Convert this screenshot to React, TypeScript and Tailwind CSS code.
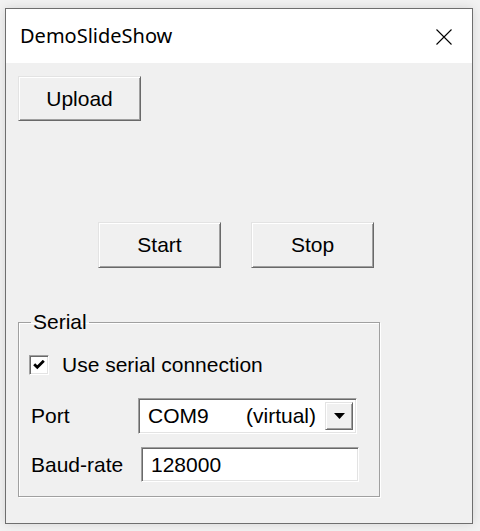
import React from 'react'

const ui = { fontFamily: '"Liberation Sans", Arial, sans-serif' }

function WinButton({ label, className }: { label: string; className?: string }) {
    return (
        <button
            type="button"
            className={`flex items-center justify-center bg-[#f0f0f0] border border-t-[#e3e3e3] border-l-[#e3e3e3] border-r-[#696969] border-b-[#696969] shadow-[inset_1px_1px_0_#ffffff,inset_-1px_-1px_0_#a0a0a0] text-[21px] text-black ${className ?? ''}`}
        >
            {label}
        </button>
    )
}

export default function App() {
    return (
        <div className="w-[480px] h-[531px] bg-[#f2f2f2] pl-[5px] pt-[8px]" style={ui}>
            {/* Dialog window */}
            <div className="w-[468px] h-[516px] border border-[#6e6e6e] bg-[#f0f0f0] shadow-[0_0_10px_rgba(0,0,0,0.12)] flex flex-col">
                {/* Title bar */}
                <div className="h-[54px] bg-white flex items-center justify-between pl-[14px] pr-[20px]">
                    <span className="text-[20px] text-black" style={{ fontFamily: '"Noto Sans", "Open Sans", sans-serif' }}>
                        DemoSlideShow
                    </span>
                    <svg width="16" height="16" viewBox="0 0 16 16" className="mt-[1px]">
                        <path d="M0.5 0.5 L15.5 15.5 M15.5 0.5 L0.5 15.5" stroke="#000" strokeWidth="1.1" />
                    </svg>
                </div>

                {/* Client area */}
                <div className="flex flex-col pl-[12px]">
                    <WinButton label="Upload" className="mt-[13px] w-[123px] h-[45px]" />

                    <div className="flex gap-[30px] mt-[101px] ml-[80px]">
                        <WinButton label="Start" className="w-[123px] h-[46px]" />
                        <WinButton label="Stop" className="w-[123px] h-[46px]" />
                    </div>

                    {/* Serial group box */}
                    <fieldset className="mt-[42px] w-[362px] border border-[#a0a0a0] shadow-[inset_1px_1px_0_#ffffff,1px_1px_0_#ffffff] pl-[12px] pb-[14px]">
                        <legend className="px-[2px] text-[21px] leading-[24px] text-black">Serial</legend>

                        <div className="flex items-center gap-[13px] mt-[19px] h-[24px] -ml-[2px]">
                            <div className="w-[20px] h-[20px] bg-white border border-t-[#a0a0a0] border-l-[#a0a0a0] border-r-white border-b-white shadow-[inset_1px_1px_0_#696969,inset_-1px_-1px_0_#e3e3e3] flex items-center justify-center">
                                <svg width="12" height="10" viewBox="0 0 12 10">
                                    <path d="M1.2 4.2 L4.3 7.3 L10.8 0.8" fill="none" stroke="#000" strokeWidth="2.8" />
                                </svg>
                            </div>
                            <span className="text-[21px] text-black">Use serial connection</span>
                        </div>

                        <div className="flex items-center mt-[21px]">
                            <span className="w-[107px] text-[21px] text-black">Port</span>
                            <div className="w-[219px] h-[36px] bg-white border border-t-[#a0a0a0] border-l-[#a0a0a0] border-r-white border-b-white shadow-[inset_1px_1px_0_#696969,inset_-1px_-1px_0_#e3e3e3] flex items-center pl-[9px] pr-[3px]">
                                <span className="text-[21px] text-black w-[98px]">COM9</span>
                                <span className="text-[21px] text-black flex-1">(virtual)</span>
                                <div className="w-[28px] h-[28px] bg-[#f0f0f0] border border-t-[#e3e3e3] border-l-[#e3e3e3] border-r-[#696969] border-b-[#696969] shadow-[inset_1px_1px_0_#ffffff,inset_-1px_-1px_0_#a0a0a0] flex items-center justify-center">
                                    <svg width="11" height="6" viewBox="0 0 11 6">
                                        <path d="M0 0 H11 L5.5 6 Z" fill="#000" />
                                    </svg>
                                </div>
                            </div>
                        </div>

                        <div className="flex items-center mt-[13px]">
                            <span className="w-[110px] text-[21px] text-black">Baud-rate</span>
                            <div className="w-[218px] h-[35px] bg-white border border-t-[#a0a0a0] border-l-[#a0a0a0] border-r-white border-b-white shadow-[inset_1px_1px_0_#696969,inset_-1px_-1px_0_#e3e3e3] flex items-center pl-[9px]">
                                <span className="text-[21px] text-black">128000</span>
                            </div>
                        </div>
                    </fieldset>
                </div>
            </div>
        </div>
    )
}
